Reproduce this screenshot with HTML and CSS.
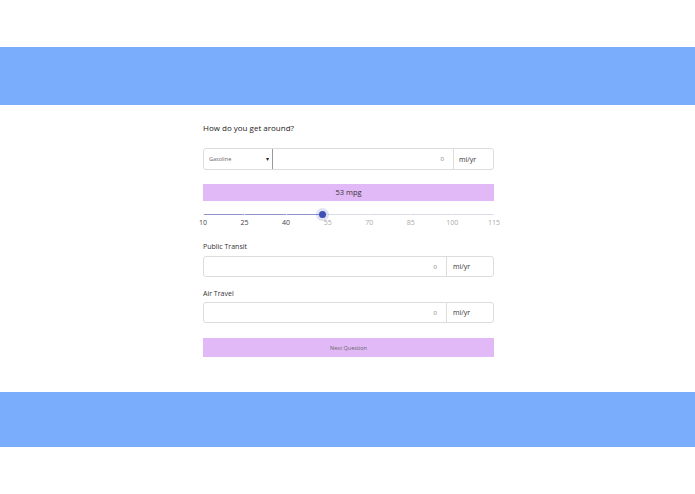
FILE: index.html
```html
<!DOCTYPE html>
<html lang="en">

<head>
    <meta charset="UTF-8">
    <meta name="viewport" content="width=device-width, initial-scale=1.0">
    <title>Carbon Footprint</title>
    <link rel="stylesheet" href="styles.css">
</head>

<body>

    <div class="band band-top"></div>

    <div class="quiz">
        <h1>How do you get around?</h1>

        <div class="field-row">
            <div class="select">
                <span>Gasoline</span>
                <span class="arrow">&#9662;</span>
            </div>
            <div class="value">0</div>
            <div class="unit">mi/yr</div>
        </div>

        <div class="mpg">53 mpg</div>

        <div class="slider">
            <div class="track">
                <div class="fill" style="width: 40.95%;"></div>
                <div class="ticks">
                    <span></span><span></span><span></span><span></span>
                    <span></span><span></span><span></span><span></span>
                </div>
                <div class="thumb" style="left: 40.95%;"></div>
            </div>
            <div class="marks">
                <span class="on">10</span>
                <span class="on">25</span>
                <span class="on">40</span>
                <span>55</span>
                <span>70</span>
                <span>85</span>
                <span>100</span>
                <span>115</span>
            </div>
        </div>

        <label class="label first">Public Transit</label>
        <div class="field-row short">
            <div class="value">0</div>
            <div class="unit">mi/yr</div>
        </div>

        <label class="label">Air Travel</label>
        <div class="field-row short">
            <div class="value">0</div>
            <div class="unit">mi/yr</div>
        </div>

        <button class="next">Next Question</button>
    </div>

    <div class="band band-bottom"></div>

</body>

</html>
```

FILE: styles.css
```css
body {
    font-family: 'Open Sans', 'Liberation Sans', sans-serif;
    margin: 0;
    background-color: #ffffff;
    color: #333;
}

.band {
    background-color: #7aadfb;
}

.band-top {
    margin-top: 47px;
    height: 58px;
}

.band-bottom {
    height: 55px;
}

.quiz {
    width: 291px;
    margin-left: calc(50% - 144.5px);
    padding: 17px 0 35px 0;
}

h1 {
    font-size: 8px;
    font-weight: 400;
    line-height: 12px;
    margin: 0 0 14px 0;
    color: #222;
}

.field-row {
    display: flex;
    height: 22px;
    border: 1px solid #dcdcdc;
    border-radius: 3px;
    box-sizing: border-box;
}

.field-row.short {
    height: 21px;
}

.select {
    width: 69px;
    display: flex;
    align-items: center;
    justify-content: space-between;
    padding: 0 3px 0 5px;
    box-sizing: border-box;
    font-size: 5.5px;
    color: #666;
    border-right: 1px solid #999;
}

.arrow {
    font-size: 6px;
    color: #222;
}

.value {
    flex: 1;
    display: flex;
    align-items: center;
    justify-content: flex-end;
    padding-right: 9px;
    font-size: 6px;
    color: #777;
}

.unit {
    width: 40px;
    display: flex;
    align-items: center;
    padding-left: 5px;
    box-sizing: border-box;
    border-left: 1px solid #dcdcdc;
    font-size: 7px;
    color: #333;
}

.short .unit {
    width: 47px;
    padding-left: 6px;
}

.mpg {
    margin-top: 14px;
    height: 17px;
    line-height: 17px;
    background-color: #e2b9f7;
    text-align: center;
    font-size: 7.5px;
    color: #333;
}

.slider {
    margin-top: 7px;
}

.track {
    position: relative;
    height: 12px;
}

.track::before {
    content: '';
    position: absolute;
    left: 0;
    right: 0;
    top: 6px;
    height: 1px;
    background-color: #d9dbe9;
}

.fill {
    position: absolute;
    left: 0;
    top: 6px;
    height: 1px;
    background-color: #8f95c8;
}

.ticks {
    position: absolute;
    left: 0;
    right: 0;
    top: 6px;
    height: 1px;
    display: flex;
    justify-content: space-between;
}

.ticks span {
    width: 1px;
    height: 1px;
    background-color: #ffffff;
    opacity: 0.7;
}

.thumb {
    position: absolute;
    top: 2.5px;
    width: 7px;
    height: 7px;
    margin-left: -3.5px;
    border-radius: 50%;
    background-color: #3f4fb3;
    box-shadow: 0 0 0 3px rgba(63, 79, 179, 0.16);
}

.marks {
    display: flex;
    justify-content: space-between;
    margin: -1px -10px 0 -10px;
}

.marks span {
    width: 20px;
    text-align: center;
    font-size: 7px;
    line-height: 8px;
    color: #aaa;
}

.marks span.on {
    color: #444;
}

.label {
    display: block;
    font-size: 7px;
    color: #333;
    line-height: 8px;
    margin: 13px 0 4px 0;
}

.label.first {
    margin: 16px 0 5px 0;
}

.next {
    display: block;
    width: 100%;
    margin-top: 15px;
    height: 19px;
    border: none;
    background-color: #e2b9f7;
    font-family: inherit;
    font-size: 5.5px;
    color: #666;
    cursor: pointer;
}
```
